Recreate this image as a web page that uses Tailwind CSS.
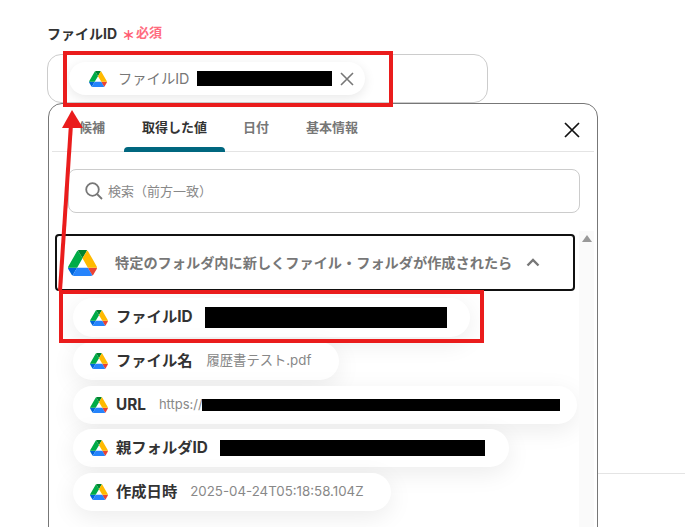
<!DOCTYPE html>
<html lang="ja">
    <head>
        <meta charset="UTF-8" />
        <meta name="viewport" content="width=device-width, initial-scale=1.0" />
        <script src="https://cdn.jsdelivr.net/npm/@tailwindcss/browser@4"></script>
        <title>ファイルID</title>
    </head>

    <body>
        <svg class="hidden">
            <symbol id="drive" viewBox="0 0 87.3 78">
                <path d="m6.6 66.85 3.85 6.65c.8 1.4 1.95 2.5 3.3 3.3l13.75-23.8h-27.5c0 1.55.4 3.1 1.2 4.5z" fill="#0066da" />
                <path d="m43.65 25-13.75-23.8c-1.35.8-2.5 1.9-3.3 3.3l-25.4 44a9.06 9.06 0 0 0 -1.2 4.5h27.5z" fill="#00ac47" />
                <path d="m73.55 76.8c1.35-.8 2.5-1.9 3.3-3.3l1.6-2.75 7.65-13.25c.8-1.4 1.2-2.95 1.2-4.5h-27.502l5.852 11.5z" fill="#ea4335" />
                <path d="m43.65 25 13.75-23.8c-1.35-.8-2.9-1.2-4.5-1.2h-18.5c-1.6 0-3.15.45-4.5 1.2z" fill="#00832d" />
                <path d="m59.8 53h-32.3l-13.75 23.8c1.35.8 2.9 1.2 4.5 1.2h50.8c1.6 0 3.15-.45 4.5-1.2z" fill="#2684fc" />
                <path d="m73.4 26.5-12.7-22c-.8-1.4-1.95-2.5-3.3-3.3l-13.75 23.8 16.15 28h27.45c0-1.55-.4-3.1-1.2-4.5z" fill="#ffba00" />
            </symbol>
        </svg>

        <div class="relative w-[685px] h-[527px] overflow-hidden bg-white pl-[47px] pt-[23px] font-['Inter','Noto_Sans_CJK_JP',sans-serif]">
            <!-- line of the page behind the panel -->
            <div class="absolute left-[560px] right-0 top-[473px] h-px bg-[#e4e4e4]"></div>

            <!-- field label -->
            <div class="flex items-center h-[20px]">
                <span class="text-[14px] font-bold text-[#333]">ファイルID</span>
                <span class="ml-[5px] text-[13px] leading-none font-black text-[#ff5c72] mt-[4px]">＊</span>
                <span class="ml-[1px] text-[13px] font-bold text-[#ff6b7e]">必須</span>
            </div>

            <!-- field input -->
            <div class="mt-[11px] w-[441px] h-[49px] rounded-[14px] border border-[#ccc] bg-white pl-[21px] pt-[7px]">
                <div class="inline-flex items-center w-[296px] h-[33px] rounded-full bg-white pl-[20px] shadow-[0_3px_12px_rgba(0,0,0,0.09)]">
                    <svg class="w-[18px] h-[16px] shrink-0"><use href="#drive" /></svg>
                    <span class="ml-[11px] w-[79px] text-[14.3px] text-[#777]">ファイルID</span>
                    <span class="w-[135px] h-[15px] bg-black"></span>
                    <svg class="ml-[8px] w-[14px] h-[14px]" viewBox="0 0 14 14" fill="none" stroke="#777" stroke-width="1.6"><path d="M1 1l12 12M13 1L1 13" /></svg>
                </div>
            </div>

            <!-- dropdown panel -->
            <div class="relative z-10 ml-[1px] w-[550px] h-[460px] rounded-t-[14px] border-[1.5px] border-[#777] bg-white">
                <!-- tabs -->
                <div class="relative flex h-[48px] mx-[3px] border-b border-[#e4e4e4] pl-[27px] text-[13px] font-bold text-[#777]">
                    <div class="w-[45px] pt-[14px]">候補</div>
                    <div class="relative w-[101px] pl-[18px] pt-[14px] text-[#333]">
                        取得した値
                        <div class="absolute left-0 right-0 bottom-[-1px] h-[5px] rounded-t-[4px] bg-[#00677f]"></div>
                    </div>
                    <div class="ml-[18px] w-[63px] pt-[14px]">日付</div>
                    <div class="pt-[14px]">基本情報</div>
                    <svg class="absolute right-[14px] top-[18px] w-[16px] h-[16px]" viewBox="0 0 16 16" fill="none" stroke="#111" stroke-width="1.7"><path d="M1 1l14 14M15 1L1 15" /></svg>
                </div>

                <!-- search -->
                <div class="flex items-center mt-[17px] ml-[19px] w-[512px] h-[44px] rounded-[8px] border border-[#ccc] pl-[16px]">
                    <svg class="w-[18px] h-[18px]" viewBox="0 0 18 18" fill="none" stroke="#777" stroke-width="1.8"><circle cx="7.5" cy="7.5" r="6.3" /><path d="M12 12l5 5" /></svg>
                    <span class="ml-[5px] pt-[2px] text-[13px] text-[#888]">検索（前方一致）</span>
                </div>

                <div class="relative flex mt-[21px]">
                    <div class="ml-[6px] w-[520px]">
                        <!-- trigger group header -->
                        <div class="flex items-center w-[520px] h-[57px] rounded-[4px] border-2 border-[#111] pl-[11px]">
                            <svg class="w-[29px] h-[26px] shrink-0"><use href="#drive" /></svg>
                            <span class="ml-[18px] w-[411px] text-[14.2px] font-bold text-[#777]">特定のフォルダ内に新しくファイル・フォルダが作成されたら</span>
                            <svg class="w-[14px] h-[9px]" viewBox="0 0 14 9" fill="none" stroke="#777" stroke-width="2.4"><path d="M1.5 7.5L7 2l5.5 5.5" /></svg>
                        </div>

                        <!-- values -->
                        <div class="flex flex-col items-start ml-[18px] mt-[7px]">
                            <div class="flex items-center w-[397px] h-[39px] rounded-full bg-white pl-[17px] shadow-[0_6px_24px_rgba(0,0,0,0.08)]">
                                <svg class="w-[18px] h-[16px] shrink-0"><use href="#drive" /></svg>
                                <span class="ml-[8px] text-[15.3px] font-bold text-[#333]">ファイルID</span>
                                <span class="ml-[12px] w-[242px] h-[21px] bg-black"></span>
                            </div>
                            <div class="flex items-center mt-[5px] w-[266px] h-[38px] rounded-full bg-white pl-[17px] shadow-[0_6px_24px_rgba(0,0,0,0.08)]">
                                <svg class="w-[18px] h-[16px] shrink-0"><use href="#drive" /></svg>
                                <span class="ml-[8px] text-[15.3px] font-bold text-[#333]">ファイル名</span>
                                <span class="ml-[14px] text-[13.3px] text-[#888]">履歴書テスト.pdf</span>
                            </div>
                            <div class="flex items-center mt-[6px] w-[504px] h-[38px] rounded-full bg-white pl-[17px] shadow-[0_6px_24px_rgba(0,0,0,0.08)]">
                                <svg class="w-[18px] h-[16px] shrink-0"><use href="#drive" /></svg>
                                <span class="ml-[8px] text-[15.3px] font-bold text-[#333]">URL</span>
                                <span class="ml-[13px] text-[13px] text-[#888]">https://</span>
                                <span class="ml-[-1px] w-[358px] h-[12px] bg-black"></span>
                            </div>
                            <div class="flex items-center mt-[5px] w-[436px] h-[38px] rounded-full bg-white pl-[17px] shadow-[0_6px_24px_rgba(0,0,0,0.08)]">
                                <svg class="w-[18px] h-[16px] shrink-0"><use href="#drive" /></svg>
                                <span class="ml-[8px] text-[15.3px] font-bold text-[#333]">親フォルダID</span>
                                <span class="ml-[12px] w-[265px] h-[16px] bg-black"></span>
                            </div>
                            <div class="flex items-center mt-[6px] w-[318px] h-[38px] rounded-full bg-white pl-[17px] shadow-[0_6px_24px_rgba(0,0,0,0.08)]">
                                <svg class="w-[18px] h-[16px] shrink-0"><use href="#drive" /></svg>
                                <span class="ml-[8px] text-[15.3px] font-bold text-[#333]">作成日時</span>
                                <span class="ml-[13px] text-[13.3px] text-[#888]">2025-04-24T05:18:58.104Z</span>
                            </div>
                        </div>
                    </div>

                    <!-- scrollbar -->
                    <div class="absolute right-[3px] top-[-3px] w-[15px] h-[300px] bg-[#fafafa]">
                        <div class="ml-[3px] mt-[4px] w-0 h-0 border-x-[5px] border-x-transparent border-b-[7px] border-b-[#999]"></div>
                    </div>
                </div>
            </div>

            <!-- red annotations on top of the screenshot -->
            <div class="absolute z-20 left-[63px] top-[51px] w-[330px] h-[56px] border-4 border-[#ea1c1c]"></div>
            <div class="absolute z-20 left-[59px] top-[290px] w-[425px] h-[53px] border-4 border-[#ea1c1c]"></div>
            <svg class="absolute z-20 left-0 top-0 w-[685px] h-[527px]" viewBox="0 0 685 527" fill="none">
                <path d="M60 291L71 124" stroke="#ea1c1c" stroke-width="4" />
                <path d="M72 110L83 128H62z" fill="#ea1c1c" />
            </svg>
        </div>
    </body>
</html>
